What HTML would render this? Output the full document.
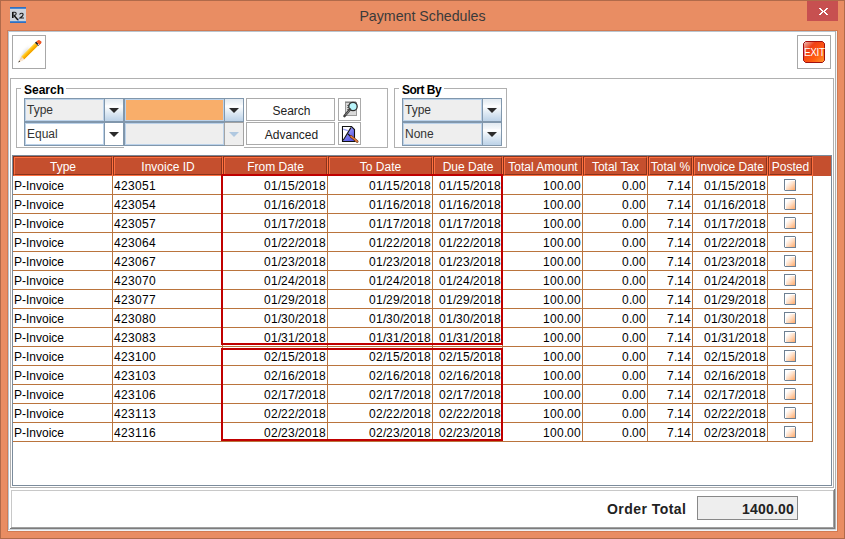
<!DOCTYPE html>
<html><head><meta charset="utf-8"><style>
html,body{margin:0;padding:0;width:845px;height:539px;overflow:hidden;background:#E98D63}
body{position:relative;font-family:"Liberation Sans",sans-serif}
body>div{position:absolute}
.t{white-space:nowrap;line-height:14px}
.n{font-size:12px;color:#000}.n i,.n b{display:inline-block;font-style:normal;font-weight:normal;width:7px}.n b{width:3px}
</style></head><body>
<div style="left:0px;top:0px;width:845px;height:539px;background:#E98D63;border:1px solid #B06A4A;box-sizing:border-box"></div>
<div style="left:7px;top:30px;width:831px;height:502px;background:#fff;border:1px solid #D27A52;box-sizing:border-box"></div>
<div style="left:8px;top:31px;width:1px;height:500px;background:#B9C5CF"></div>
<div style="left:8px;top:31px;width:829px;height:1px;background:#B9C5CF"></div>
<div style="left:835px;top:31px;width:1px;height:498px;background:#B0B0B0"></div>
<div style="left:836px;top:31px;width:1px;height:500px;background:#F0F4F7"></div>
<div style="left:8px;top:530px;width:829px;height:1px;background:#F0F4F7"></div>
<div style="left:9px;top:529px;width:827px;height:1px;background:#CDD3D8"></div>
<div style="left:807px;top:1px;width:31px;height:20px;background:#C75050"></div>
<div style="left:819px;top:8px;width:2px;height:1px;background:#fff"></div>
<div style="left:826px;top:8px;width:2px;height:1px;background:#fff"></div>
<div style="left:820px;top:9px;width:2px;height:1px;background:#fff"></div>
<div style="left:825px;top:9px;width:2px;height:1px;background:#fff"></div>
<div style="left:821px;top:10px;width:2px;height:1px;background:#fff"></div>
<div style="left:824px;top:10px;width:2px;height:1px;background:#fff"></div>
<div style="left:822px;top:11px;width:3px;height:1px;background:#fff"></div>
<div style="left:821px;top:12px;width:2px;height:1px;background:#fff"></div>
<div style="left:824px;top:12px;width:2px;height:1px;background:#fff"></div>
<div style="left:820px;top:13px;width:2px;height:1px;background:#fff"></div>
<div style="left:825px;top:13px;width:2px;height:1px;background:#fff"></div>
<div style="left:819px;top:14px;width:2px;height:1px;background:#fff"></div>
<div style="left:826px;top:14px;width:2px;height:1px;background:#fff"></div>
<div class="t" style="left:0px;top:9px;width:845px;text-align:center;font-size:14.2px;color:#3A3A3A;">Payment Schedules</div>
<svg style="position:absolute;left:10px;top:7px" width="16" height="16" viewBox="0 0 16 16">
<rect x="0" y="0" width="16" height="16" fill="#CDD2DA"/>
<rect x="0" y="0" width="16" height="1" fill="#2F6FC0"/><rect x="0" y="1" width="16" height="1" fill="#4A88D0"/>
<rect x="0" y="14" width="16" height="1" fill="#4A88D0"/><rect x="0" y="15" width="16" height="1" fill="#2F6FC0"/>
<rect x="2" y="5" width="1.6" height="6" fill="#111"/>
<path d="M2.5 5.2 L5 5.2 Q6.6 5.6 6 7.2 Q5.4 8.4 3.5 8.4" fill="none" stroke="#222" stroke-width="1.1"/>
<path d="M4 8.5 L8 13" stroke="#111" stroke-width="1.4"/>
<path d="M9.5 7.5 Q11 5.6 12.8 6.6 Q13.6 7.6 12.4 9 L10 11 L14 11" fill="none" stroke="#222" stroke-width="1.2"/>
<rect x="8" y="12.4" width="1" height="1" fill="#3060C0"/>
</svg>
<div style="left:12px;top:35px;width:34px;height:34px;border:1px solid #A8A8A8;box-sizing:border-box"></div>
<div style="left:797px;top:35px;width:34px;height:34px;border:1px solid #A8A8A8;box-sizing:border-box"></div>
<svg style="position:absolute;left:12px;top:35px" width="34" height="34" viewBox="0 0 34 34">
<defs>
<linearGradient id="pg" gradientUnits="userSpaceOnUse" x1="16.5" y1="14.5" x2="19.6" y2="17.6"><stop offset="0" stop-color="#FFD650"/><stop offset="0.45" stop-color="#FFB800"/><stop offset="0.8" stop-color="#F2A000"/><stop offset="1" stop-color="#FFE27A"/></linearGradient>
<filter id="bl" x="-50%" y="-50%" width="200%" height="200%"><feGaussianBlur stdDeviation="1.5"/></filter>
</defs>
<path d="M7 26 L12 17 L18 11 L13 21 Z" fill="#A0A0A0" opacity="0.5" filter="url(#bl)"/>
<path d="M9.2 21.45 L12.28 24.59 L26.04 11.01 L22.96 7.87 Z" fill="url(#pg)"/>
<path d="M6.3 27.4 L9.2 21.45 L12.28 24.59 Z" fill="#F2CFA8"/>
<path d="M6.3 27.4 L10.5 23.3 L12.28 24.59 Z" fill="#FBE6D0"/>
<path d="M6.3 27.4 L7.17 25.62 L8.09 26.56 Z" fill="#222"/>
<path d="M22.96 7.87 L26.04 11.01 L27.38 9.7 L24.3 6.56 Z" fill="#1E1E1E"/>
<path d="M25.2 10.2 L27.38 9.7 L26.5 8.6 Z" fill="#E8E8E8"/>
<path d="M24.3 6.56 L27.38 9.7 L28.6 8.5 Q29.6 7.2 28.6 6 Q27.4 4.8 26.1 5.2 Z" fill="#FF5A1E"/>
<path d="M27.38 9.7 L28.6 8.5 Q29.6 7.2 28.6 6" fill="none" stroke="#D83A10" stroke-width="0.7"/>
</svg>
<svg style="position:absolute;left:803px;top:41px" width="22" height="22" viewBox="0 0 22 22">
<defs><linearGradient id="eg" x1="0" y1="0" x2="1" y2="1"><stop offset="0" stop-color="#E8C8C8"/><stop offset="0.3" stop-color="#F04018"/><stop offset="0.65" stop-color="#FF5A10"/><stop offset="1" stop-color="#FF9A30"/></linearGradient></defs>
<path d="M2.5 0.5 L19.5 0.5 L21.5 2.5 L21.5 19.5 L19.5 21.5 L2.5 21.5 L0.5 19.5 L0.5 2.5 Z" fill="url(#eg)" stroke="#A01010" stroke-width="1"/>
<text x="11.3" y="15.2" font-family="Liberation Sans" font-size="10" fill="#fff" text-anchor="middle" letter-spacing="-0.35">EXIT</text>
</svg>
<div style="left:10px;top:78px;width:824px;height:410px;border:1px solid #B0B0B0;box-sizing:border-box"></div>
<div style="left:16px;top:88px;width:372px;height:60px;border:1px solid #B0B0B0;box-sizing:border-box"></div>
<div style="left:21px;top:80px;width:45px;height:12px;background:#fff"></div>
<div class="t" style="left:24px;top:83px;text-align:left;font-weight:bold;font-size:12px;color:#000;">Search</div>
<div style="left:394px;top:88px;width:113px;height:60px;border:1px solid #B0B0B0;box-sizing:border-box"></div>
<div style="left:399px;top:80px;width:45px;height:12px;background:#fff"></div>
<div class="t" style="left:402px;top:83px;text-align:left;font-weight:bold;font-size:12px;color:#000;letter-spacing:-0.5px">Sort By</div>
<div style="left:124px;top:147px;width:120px;height:1px;background:#fff"></div>
<div style="left:24px;top:98px;width:100px;height:24px;background:#8197AC"></div>
<div style="left:25px;top:99px;width:79px;height:22px;background:#BBD2EA"></div>
<div style="left:26px;top:100px;width:77px;height:20px;background:#EEEEEE"></div>
<div style="left:105px;top:99px;width:18px;height:22px;background:linear-gradient(#E2EAF1 0%,#F4F7FA 25%,#FFFFFF 32%,#E2ECF5 60%,#BCD2E8 100%)"></div>
<svg style="position:absolute;left:109px;top:108px" width="10" height="5"><path d="M0 0 L10 0 L5 5 Z" fill="#2B2B2B"/></svg>
<div class="t" style="left:27px;top:103px;text-align:left;font-size:12px;color:#333;">Type</div>
<div style="left:24px;top:122px;width:100px;height:24px;background:#8197AC"></div>
<div style="left:25px;top:123px;width:79px;height:22px;background:#BBD2EA"></div>
<div style="left:26px;top:124px;width:77px;height:20px;background:#fff"></div>
<div style="left:105px;top:123px;width:18px;height:22px;background:#fff"></div>
<svg style="position:absolute;left:109px;top:132px" width="10" height="5"><path d="M0 0 L10 0 L5 5 Z" fill="#2B2B2B"/></svg>
<div class="t" style="left:27px;top:127px;text-align:left;font-size:12px;color:#333;">Equal</div>
<div style="left:124px;top:98px;width:120px;height:24px;background:#8197AC"></div>
<div style="left:125px;top:99px;width:99px;height:22px;background:#BBD2EA"></div>
<div style="left:126px;top:100px;width:97px;height:20px;background:#F9AE6A"></div>
<div style="left:225px;top:99px;width:18px;height:22px;background:linear-gradient(#E2EAF1 0%,#F4F7FA 25%,#FFFFFF 32%,#E2ECF5 60%,#BCD2E8 100%)"></div>
<svg style="position:absolute;left:229px;top:108px" width="10" height="5"><path d="M0 0 L10 0 L5 5 Z" fill="#2B2B2B"/></svg>
<div style="left:124px;top:122px;width:120px;height:24px;background:#8197AC"></div>
<div style="left:125px;top:123px;width:99px;height:22px;background:#BBD2EA"></div>
<div style="left:126px;top:124px;width:97px;height:20px;background:#EEEEEE"></div>
<div style="left:225px;top:123px;width:18px;height:22px;background:#EEEEEE"></div>
<svg style="position:absolute;left:229px;top:132px" width="10" height="5"><path d="M0 0 L10 0 L5 5 Z" fill="#2B2B2B"/></svg>
<div style="left:225px;top:122px;width:19px;height:1px;background:#A3A3A3"></div>
<div style="left:225px;top:145px;width:19px;height:1px;background:#A3A3A3"></div>
<div style="left:243px;top:122px;width:1px;height:24px;background:#A3A3A3"></div>
<div style="left:224px;top:123px;width:1px;height:22px;background:#A3A3A3"></div>
<div style="left:225px;top:123px;width:18px;height:22px;background:#EEEEEE"></div>
<svg style="position:absolute;left:229px;top:132px" width="10" height="5"><path d="M0 0 L10 0 L5 5 Z" fill="#B0C8E0"/></svg>
<div style="left:402px;top:98px;width:100px;height:24px;background:#8197AC"></div>
<div style="left:403px;top:99px;width:79px;height:22px;background:#BBD2EA"></div>
<div style="left:404px;top:100px;width:77px;height:20px;background:#EEEEEE"></div>
<div style="left:483px;top:99px;width:18px;height:22px;background:linear-gradient(#E2EAF1 0%,#F4F7FA 25%,#FFFFFF 32%,#E2ECF5 60%,#BCD2E8 100%)"></div>
<svg style="position:absolute;left:487px;top:108px" width="10" height="5"><path d="M0 0 L10 0 L5 5 Z" fill="#2B2B2B"/></svg>
<div class="t" style="left:405px;top:103px;text-align:left;font-size:12px;color:#333;">Type</div>
<div style="left:402px;top:122px;width:100px;height:24px;background:#8197AC"></div>
<div style="left:403px;top:123px;width:79px;height:22px;background:#BBD2EA"></div>
<div style="left:404px;top:124px;width:77px;height:20px;background:#EEEEEE"></div>
<div style="left:483px;top:123px;width:18px;height:22px;background:linear-gradient(#E2EAF1 0%,#F4F7FA 25%,#FFFFFF 32%,#E2ECF5 60%,#BCD2E8 100%)"></div>
<svg style="position:absolute;left:487px;top:132px" width="10" height="5"><path d="M0 0 L10 0 L5 5 Z" fill="#2B2B2B"/></svg>
<div class="t" style="left:405px;top:127px;text-align:left;font-size:12px;color:#333;">None</div>
<div style="left:246px;top:98px;width:89px;height:23px;border:1px solid #ABABAB;box-sizing:border-box"></div>
<div class="t" style="left:247px;top:104px;width:89px;text-align:center;font-size:12px;color:#222;">Search</div>
<div style="left:246px;top:122px;width:89px;height:23px;border:1px solid #ABABAB;box-sizing:border-box"></div>
<div class="t" style="left:247px;top:128px;width:89px;text-align:center;font-size:12px;color:#222;">Advanced</div>
<div style="left:338px;top:98px;width:23px;height:23px;border:1px solid #ABABAB;box-sizing:border-box"></div>
<div style="left:338px;top:122px;width:23px;height:23px;border:1px solid #ABABAB;box-sizing:border-box"></div>
<svg style="position:absolute;left:338px;top:98px" width="23" height="23" viewBox="0 0 23 23">
<rect x="7.5" y="4.5" width="11" height="13" fill="#DADADA" stroke="#9A9A9A" stroke-width="1"/>
<path d="M7 4 L18 4" stroke="#777" stroke-width="1"/>
<rect x="9" y="7" width="2" height="1" fill="#777"/><rect x="9" y="9" width="2" height="1" fill="#777"/><rect x="9" y="11" width="2" height="1" fill="#777"/>
<circle cx="15" cy="8.5" r="4.2" fill="#B8F4FA" stroke="#303030" stroke-width="1.3"/>
<path d="M12 11.5 L6.5 18" stroke="#404040" stroke-width="2.6" stroke-linecap="round"/>
<path d="M11.5 12.5 L7.5 17" stroke="#A0A0A0" stroke-width="0.8"/>
</svg>
<svg style="position:absolute;left:338px;top:122px" width="23" height="23" viewBox="0 0 23 23">
<defs><linearGradient id="dg" x1="0" y1="0" x2="0.6" y2="1"><stop offset="0" stop-color="#B4B4FA"/><stop offset="1" stop-color="#5858E6"/></linearGradient></defs>
<path d="M4.5 4.5 L13.5 4.5 L16.5 7.5 L16.5 19.5 L4.5 19.5 Z" fill="url(#dg)" stroke="#111" stroke-width="1.1"/>
<path d="M5 5 L13 5 L6.3 16.5 L5 18.8 Z" fill="#FFFFFF"/>
<path d="M5.2 7.2 L9.8 8.6" stroke="#A0A0F6" stroke-width="1.4"/>
<path d="M5.2 18.2 L12.9 5.6" stroke="#111" stroke-width="1.1"/>
<path d="M10 12 L14 15.6" stroke="#111" stroke-width="1.1"/>
<path d="M13 14.4 L19.2 19.4" stroke="#5A2A10" stroke-width="2.6" stroke-linecap="round"/>
<path d="M13 14.4 L19.2 19.4" stroke="#E07A3A" stroke-width="1.5" stroke-linecap="round"/>
</svg>
<div style="left:12px;top:155px;width:820px;height:331px;border:1px solid #7B8B9B;box-sizing:border-box"></div>
<div style="left:13px;top:156px;width:818px;height:20px;background:#C54F2E"></div>
<div style="left:13px;top:156px;width:100px;height:20px;border:1px solid;border-color:#8A331B #FF7040 #FF7040 #8A331B;box-sizing:border-box"></div>
<div style="left:14px;top:157px;width:98px;height:18px;border:1px solid;border-color:#FF7040 #8A331B #8A331B #FF7040;box-sizing:border-box"></div>
<div class="t" style="left:13px;top:160px;width:100px;text-align:center;font-size:12px;color:#fff;">Type</div>
<div style="left:113px;top:156px;width:110px;height:20px;border:1px solid;border-color:#8A331B #FF7040 #FF7040 #8A331B;box-sizing:border-box"></div>
<div style="left:114px;top:157px;width:108px;height:18px;border:1px solid;border-color:#FF7040 #8A331B #8A331B #FF7040;box-sizing:border-box"></div>
<div class="t" style="left:113px;top:160px;width:110px;text-align:center;font-size:12px;color:#fff;">Invoice ID</div>
<div style="left:223px;top:156px;width:105px;height:20px;border:1px solid;border-color:#8A331B #FF7040 #FF7040 #8A331B;box-sizing:border-box"></div>
<div style="left:224px;top:157px;width:103px;height:18px;border:1px solid;border-color:#FF7040 #8A331B #8A331B #FF7040;box-sizing:border-box"></div>
<div class="t" style="left:223px;top:160px;width:105px;text-align:center;font-size:12px;color:#fff;">From Date</div>
<div style="left:328px;top:156px;width:105px;height:20px;border:1px solid;border-color:#8A331B #FF7040 #FF7040 #8A331B;box-sizing:border-box"></div>
<div style="left:329px;top:157px;width:103px;height:18px;border:1px solid;border-color:#FF7040 #8A331B #8A331B #FF7040;box-sizing:border-box"></div>
<div class="t" style="left:328px;top:160px;width:105px;text-align:center;font-size:12px;color:#fff;">To Date</div>
<div style="left:433px;top:156px;width:70px;height:20px;border:1px solid;border-color:#8A331B #FF7040 #FF7040 #8A331B;box-sizing:border-box"></div>
<div style="left:434px;top:157px;width:68px;height:18px;border:1px solid;border-color:#FF7040 #8A331B #8A331B #FF7040;box-sizing:border-box"></div>
<div class="t" style="left:433px;top:160px;width:70px;text-align:center;font-size:12px;color:#fff;">Due Date</div>
<div style="left:503px;top:156px;width:80px;height:20px;border:1px solid;border-color:#8A331B #FF7040 #FF7040 #8A331B;box-sizing:border-box"></div>
<div style="left:504px;top:157px;width:78px;height:18px;border:1px solid;border-color:#FF7040 #8A331B #8A331B #FF7040;box-sizing:border-box"></div>
<div class="t" style="left:503px;top:160px;width:80px;text-align:center;font-size:12px;color:#fff;">Total Amount</div>
<div style="left:583px;top:156px;width:65px;height:20px;border:1px solid;border-color:#8A331B #FF7040 #FF7040 #8A331B;box-sizing:border-box"></div>
<div style="left:584px;top:157px;width:63px;height:18px;border:1px solid;border-color:#FF7040 #8A331B #8A331B #FF7040;box-sizing:border-box"></div>
<div class="t" style="left:583px;top:160px;width:65px;text-align:center;font-size:12px;color:#fff;">Total Tax</div>
<div style="left:648px;top:156px;width:45px;height:20px;border:1px solid;border-color:#8A331B #FF7040 #FF7040 #8A331B;box-sizing:border-box"></div>
<div style="left:649px;top:157px;width:43px;height:18px;border:1px solid;border-color:#FF7040 #8A331B #8A331B #FF7040;box-sizing:border-box"></div>
<div class="t" style="left:648px;top:160px;width:45px;text-align:center;font-size:12px;color:#fff;">Total %</div>
<div style="left:693px;top:156px;width:75px;height:20px;border:1px solid;border-color:#8A331B #FF7040 #FF7040 #8A331B;box-sizing:border-box"></div>
<div style="left:694px;top:157px;width:73px;height:18px;border:1px solid;border-color:#FF7040 #8A331B #8A331B #FF7040;box-sizing:border-box"></div>
<div class="t" style="left:693px;top:160px;width:75px;text-align:center;font-size:12px;color:#fff;">Invoice Date</div>
<div style="left:768px;top:156px;width:45px;height:20px;border:1px solid;border-color:#8A331B #FF7040 #FF7040 #8A331B;box-sizing:border-box"></div>
<div style="left:769px;top:157px;width:43px;height:18px;border:1px solid;border-color:#FF7040 #8A331B #8A331B #FF7040;box-sizing:border-box"></div>
<div class="t" style="left:768px;top:160px;width:45px;text-align:center;font-size:12px;color:#fff;">Posted</div>
<div style="left:13px;top:194px;width:800px;height:1px;background:#BA743D"></div>
<div class="t" style="left:14px;top:179px;width:98px;text-align:left;font-size:12px;color:#000;">P-Invoice</div>
<div class="t n" style="left:114px;top:179px"><i>4</i><i>2</i><i>3</i><i>0</i><i>5</i><i>1</i></div>
<div class="t n" style="left:264px;top:179px"><i>0</i><i>1</i><b>/</b><i>1</i><i>5</i><b>/</b><i>2</i><i>0</i><i>1</i><i>8</i></div>
<div class="t n" style="left:369px;top:179px"><i>0</i><i>1</i><b>/</b><i>1</i><i>5</i><b>/</b><i>2</i><i>0</i><i>1</i><i>8</i></div>
<div class="t n" style="left:439px;top:179px"><i>0</i><i>1</i><b>/</b><i>1</i><i>5</i><b>/</b><i>2</i><i>0</i><i>1</i><i>8</i></div>
<div class="t n" style="left:543px;top:179px"><i>1</i><i>0</i><i>0</i><b>.</b><i>0</i><i>0</i></div>
<div class="t n" style="left:622px;top:179px"><i>0</i><b>.</b><i>0</i><i>0</i></div>
<div class="t n" style="left:667px;top:179px"><i>7</i><b>.</b><i>1</i><i>4</i></div>
<div class="t n" style="left:704px;top:179px"><i>0</i><i>1</i><b>/</b><i>1</i><i>5</i><b>/</b><i>2</i><i>0</i><i>1</i><i>8</i></div>
<div style="left:13px;top:213px;width:800px;height:1px;background:#BA743D"></div>
<div class="t" style="left:14px;top:198px;width:98px;text-align:left;font-size:12px;color:#000;">P-Invoice</div>
<div class="t n" style="left:114px;top:198px"><i>4</i><i>2</i><i>3</i><i>0</i><i>5</i><i>4</i></div>
<div class="t n" style="left:264px;top:198px"><i>0</i><i>1</i><b>/</b><i>1</i><i>6</i><b>/</b><i>2</i><i>0</i><i>1</i><i>8</i></div>
<div class="t n" style="left:369px;top:198px"><i>0</i><i>1</i><b>/</b><i>1</i><i>6</i><b>/</b><i>2</i><i>0</i><i>1</i><i>8</i></div>
<div class="t n" style="left:439px;top:198px"><i>0</i><i>1</i><b>/</b><i>1</i><i>6</i><b>/</b><i>2</i><i>0</i><i>1</i><i>8</i></div>
<div class="t n" style="left:543px;top:198px"><i>1</i><i>0</i><i>0</i><b>.</b><i>0</i><i>0</i></div>
<div class="t n" style="left:622px;top:198px"><i>0</i><b>.</b><i>0</i><i>0</i></div>
<div class="t n" style="left:667px;top:198px"><i>7</i><b>.</b><i>1</i><i>4</i></div>
<div class="t n" style="left:704px;top:198px"><i>0</i><i>1</i><b>/</b><i>1</i><i>6</i><b>/</b><i>2</i><i>0</i><i>1</i><i>8</i></div>
<div style="left:13px;top:232px;width:800px;height:1px;background:#BA743D"></div>
<div class="t" style="left:14px;top:217px;width:98px;text-align:left;font-size:12px;color:#000;">P-Invoice</div>
<div class="t n" style="left:114px;top:217px"><i>4</i><i>2</i><i>3</i><i>0</i><i>5</i><i>7</i></div>
<div class="t n" style="left:264px;top:217px"><i>0</i><i>1</i><b>/</b><i>1</i><i>7</i><b>/</b><i>2</i><i>0</i><i>1</i><i>8</i></div>
<div class="t n" style="left:369px;top:217px"><i>0</i><i>1</i><b>/</b><i>1</i><i>7</i><b>/</b><i>2</i><i>0</i><i>1</i><i>8</i></div>
<div class="t n" style="left:439px;top:217px"><i>0</i><i>1</i><b>/</b><i>1</i><i>7</i><b>/</b><i>2</i><i>0</i><i>1</i><i>8</i></div>
<div class="t n" style="left:543px;top:217px"><i>1</i><i>0</i><i>0</i><b>.</b><i>0</i><i>0</i></div>
<div class="t n" style="left:622px;top:217px"><i>0</i><b>.</b><i>0</i><i>0</i></div>
<div class="t n" style="left:667px;top:217px"><i>7</i><b>.</b><i>1</i><i>4</i></div>
<div class="t n" style="left:704px;top:217px"><i>0</i><i>1</i><b>/</b><i>1</i><i>7</i><b>/</b><i>2</i><i>0</i><i>1</i><i>8</i></div>
<div style="left:13px;top:251px;width:800px;height:1px;background:#BA743D"></div>
<div class="t" style="left:14px;top:236px;width:98px;text-align:left;font-size:12px;color:#000;">P-Invoice</div>
<div class="t n" style="left:114px;top:236px"><i>4</i><i>2</i><i>3</i><i>0</i><i>6</i><i>4</i></div>
<div class="t n" style="left:264px;top:236px"><i>0</i><i>1</i><b>/</b><i>2</i><i>2</i><b>/</b><i>2</i><i>0</i><i>1</i><i>8</i></div>
<div class="t n" style="left:369px;top:236px"><i>0</i><i>1</i><b>/</b><i>2</i><i>2</i><b>/</b><i>2</i><i>0</i><i>1</i><i>8</i></div>
<div class="t n" style="left:439px;top:236px"><i>0</i><i>1</i><b>/</b><i>2</i><i>2</i><b>/</b><i>2</i><i>0</i><i>1</i><i>8</i></div>
<div class="t n" style="left:543px;top:236px"><i>1</i><i>0</i><i>0</i><b>.</b><i>0</i><i>0</i></div>
<div class="t n" style="left:622px;top:236px"><i>0</i><b>.</b><i>0</i><i>0</i></div>
<div class="t n" style="left:667px;top:236px"><i>7</i><b>.</b><i>1</i><i>4</i></div>
<div class="t n" style="left:704px;top:236px"><i>0</i><i>1</i><b>/</b><i>2</i><i>2</i><b>/</b><i>2</i><i>0</i><i>1</i><i>8</i></div>
<div style="left:13px;top:270px;width:800px;height:1px;background:#BA743D"></div>
<div class="t" style="left:14px;top:255px;width:98px;text-align:left;font-size:12px;color:#000;">P-Invoice</div>
<div class="t n" style="left:114px;top:255px"><i>4</i><i>2</i><i>3</i><i>0</i><i>6</i><i>7</i></div>
<div class="t n" style="left:264px;top:255px"><i>0</i><i>1</i><b>/</b><i>2</i><i>3</i><b>/</b><i>2</i><i>0</i><i>1</i><i>8</i></div>
<div class="t n" style="left:369px;top:255px"><i>0</i><i>1</i><b>/</b><i>2</i><i>3</i><b>/</b><i>2</i><i>0</i><i>1</i><i>8</i></div>
<div class="t n" style="left:439px;top:255px"><i>0</i><i>1</i><b>/</b><i>2</i><i>3</i><b>/</b><i>2</i><i>0</i><i>1</i><i>8</i></div>
<div class="t n" style="left:543px;top:255px"><i>1</i><i>0</i><i>0</i><b>.</b><i>0</i><i>0</i></div>
<div class="t n" style="left:622px;top:255px"><i>0</i><b>.</b><i>0</i><i>0</i></div>
<div class="t n" style="left:667px;top:255px"><i>7</i><b>.</b><i>1</i><i>4</i></div>
<div class="t n" style="left:704px;top:255px"><i>0</i><i>1</i><b>/</b><i>2</i><i>3</i><b>/</b><i>2</i><i>0</i><i>1</i><i>8</i></div>
<div style="left:13px;top:289px;width:800px;height:1px;background:#BA743D"></div>
<div class="t" style="left:14px;top:274px;width:98px;text-align:left;font-size:12px;color:#000;">P-Invoice</div>
<div class="t n" style="left:114px;top:274px"><i>4</i><i>2</i><i>3</i><i>0</i><i>7</i><i>0</i></div>
<div class="t n" style="left:264px;top:274px"><i>0</i><i>1</i><b>/</b><i>2</i><i>4</i><b>/</b><i>2</i><i>0</i><i>1</i><i>8</i></div>
<div class="t n" style="left:369px;top:274px"><i>0</i><i>1</i><b>/</b><i>2</i><i>4</i><b>/</b><i>2</i><i>0</i><i>1</i><i>8</i></div>
<div class="t n" style="left:439px;top:274px"><i>0</i><i>1</i><b>/</b><i>2</i><i>4</i><b>/</b><i>2</i><i>0</i><i>1</i><i>8</i></div>
<div class="t n" style="left:543px;top:274px"><i>1</i><i>0</i><i>0</i><b>.</b><i>0</i><i>0</i></div>
<div class="t n" style="left:622px;top:274px"><i>0</i><b>.</b><i>0</i><i>0</i></div>
<div class="t n" style="left:667px;top:274px"><i>7</i><b>.</b><i>1</i><i>4</i></div>
<div class="t n" style="left:704px;top:274px"><i>0</i><i>1</i><b>/</b><i>2</i><i>4</i><b>/</b><i>2</i><i>0</i><i>1</i><i>8</i></div>
<div style="left:13px;top:308px;width:800px;height:1px;background:#BA743D"></div>
<div class="t" style="left:14px;top:293px;width:98px;text-align:left;font-size:12px;color:#000;">P-Invoice</div>
<div class="t n" style="left:114px;top:293px"><i>4</i><i>2</i><i>3</i><i>0</i><i>7</i><i>7</i></div>
<div class="t n" style="left:264px;top:293px"><i>0</i><i>1</i><b>/</b><i>2</i><i>9</i><b>/</b><i>2</i><i>0</i><i>1</i><i>8</i></div>
<div class="t n" style="left:369px;top:293px"><i>0</i><i>1</i><b>/</b><i>2</i><i>9</i><b>/</b><i>2</i><i>0</i><i>1</i><i>8</i></div>
<div class="t n" style="left:439px;top:293px"><i>0</i><i>1</i><b>/</b><i>2</i><i>9</i><b>/</b><i>2</i><i>0</i><i>1</i><i>8</i></div>
<div class="t n" style="left:543px;top:293px"><i>1</i><i>0</i><i>0</i><b>.</b><i>0</i><i>0</i></div>
<div class="t n" style="left:622px;top:293px"><i>0</i><b>.</b><i>0</i><i>0</i></div>
<div class="t n" style="left:667px;top:293px"><i>7</i><b>.</b><i>1</i><i>4</i></div>
<div class="t n" style="left:704px;top:293px"><i>0</i><i>1</i><b>/</b><i>2</i><i>9</i><b>/</b><i>2</i><i>0</i><i>1</i><i>8</i></div>
<div style="left:13px;top:327px;width:800px;height:1px;background:#BA743D"></div>
<div class="t" style="left:14px;top:312px;width:98px;text-align:left;font-size:12px;color:#000;">P-Invoice</div>
<div class="t n" style="left:114px;top:312px"><i>4</i><i>2</i><i>3</i><i>0</i><i>8</i><i>0</i></div>
<div class="t n" style="left:264px;top:312px"><i>0</i><i>1</i><b>/</b><i>3</i><i>0</i><b>/</b><i>2</i><i>0</i><i>1</i><i>8</i></div>
<div class="t n" style="left:369px;top:312px"><i>0</i><i>1</i><b>/</b><i>3</i><i>0</i><b>/</b><i>2</i><i>0</i><i>1</i><i>8</i></div>
<div class="t n" style="left:439px;top:312px"><i>0</i><i>1</i><b>/</b><i>3</i><i>0</i><b>/</b><i>2</i><i>0</i><i>1</i><i>8</i></div>
<div class="t n" style="left:543px;top:312px"><i>1</i><i>0</i><i>0</i><b>.</b><i>0</i><i>0</i></div>
<div class="t n" style="left:622px;top:312px"><i>0</i><b>.</b><i>0</i><i>0</i></div>
<div class="t n" style="left:667px;top:312px"><i>7</i><b>.</b><i>1</i><i>4</i></div>
<div class="t n" style="left:704px;top:312px"><i>0</i><i>1</i><b>/</b><i>3</i><i>0</i><b>/</b><i>2</i><i>0</i><i>1</i><i>8</i></div>
<div style="left:13px;top:346px;width:800px;height:1px;background:#BA743D"></div>
<div class="t" style="left:14px;top:331px;width:98px;text-align:left;font-size:12px;color:#000;">P-Invoice</div>
<div class="t n" style="left:114px;top:331px"><i>4</i><i>2</i><i>3</i><i>0</i><i>8</i><i>3</i></div>
<div class="t n" style="left:264px;top:331px"><i>0</i><i>1</i><b>/</b><i>3</i><i>1</i><b>/</b><i>2</i><i>0</i><i>1</i><i>8</i></div>
<div class="t n" style="left:369px;top:331px"><i>0</i><i>1</i><b>/</b><i>3</i><i>1</i><b>/</b><i>2</i><i>0</i><i>1</i><i>8</i></div>
<div class="t n" style="left:439px;top:331px"><i>0</i><i>1</i><b>/</b><i>3</i><i>1</i><b>/</b><i>2</i><i>0</i><i>1</i><i>8</i></div>
<div class="t n" style="left:543px;top:331px"><i>1</i><i>0</i><i>0</i><b>.</b><i>0</i><i>0</i></div>
<div class="t n" style="left:622px;top:331px"><i>0</i><b>.</b><i>0</i><i>0</i></div>
<div class="t n" style="left:667px;top:331px"><i>7</i><b>.</b><i>1</i><i>4</i></div>
<div class="t n" style="left:704px;top:331px"><i>0</i><i>1</i><b>/</b><i>3</i><i>1</i><b>/</b><i>2</i><i>0</i><i>1</i><i>8</i></div>
<div style="left:13px;top:365px;width:800px;height:1px;background:#BA743D"></div>
<div class="t" style="left:14px;top:350px;width:98px;text-align:left;font-size:12px;color:#000;">P-Invoice</div>
<div class="t n" style="left:114px;top:350px"><i>4</i><i>2</i><i>3</i><i>1</i><i>0</i><i>0</i></div>
<div class="t n" style="left:264px;top:350px"><i>0</i><i>2</i><b>/</b><i>1</i><i>5</i><b>/</b><i>2</i><i>0</i><i>1</i><i>8</i></div>
<div class="t n" style="left:369px;top:350px"><i>0</i><i>2</i><b>/</b><i>1</i><i>5</i><b>/</b><i>2</i><i>0</i><i>1</i><i>8</i></div>
<div class="t n" style="left:439px;top:350px"><i>0</i><i>2</i><b>/</b><i>1</i><i>5</i><b>/</b><i>2</i><i>0</i><i>1</i><i>8</i></div>
<div class="t n" style="left:543px;top:350px"><i>1</i><i>0</i><i>0</i><b>.</b><i>0</i><i>0</i></div>
<div class="t n" style="left:622px;top:350px"><i>0</i><b>.</b><i>0</i><i>0</i></div>
<div class="t n" style="left:667px;top:350px"><i>7</i><b>.</b><i>1</i><i>4</i></div>
<div class="t n" style="left:704px;top:350px"><i>0</i><i>2</i><b>/</b><i>1</i><i>5</i><b>/</b><i>2</i><i>0</i><i>1</i><i>8</i></div>
<div style="left:13px;top:384px;width:800px;height:1px;background:#BA743D"></div>
<div class="t" style="left:14px;top:369px;width:98px;text-align:left;font-size:12px;color:#000;">P-Invoice</div>
<div class="t n" style="left:114px;top:369px"><i>4</i><i>2</i><i>3</i><i>1</i><i>0</i><i>3</i></div>
<div class="t n" style="left:264px;top:369px"><i>0</i><i>2</i><b>/</b><i>1</i><i>6</i><b>/</b><i>2</i><i>0</i><i>1</i><i>8</i></div>
<div class="t n" style="left:369px;top:369px"><i>0</i><i>2</i><b>/</b><i>1</i><i>6</i><b>/</b><i>2</i><i>0</i><i>1</i><i>8</i></div>
<div class="t n" style="left:439px;top:369px"><i>0</i><i>2</i><b>/</b><i>1</i><i>6</i><b>/</b><i>2</i><i>0</i><i>1</i><i>8</i></div>
<div class="t n" style="left:543px;top:369px"><i>1</i><i>0</i><i>0</i><b>.</b><i>0</i><i>0</i></div>
<div class="t n" style="left:622px;top:369px"><i>0</i><b>.</b><i>0</i><i>0</i></div>
<div class="t n" style="left:667px;top:369px"><i>7</i><b>.</b><i>1</i><i>4</i></div>
<div class="t n" style="left:704px;top:369px"><i>0</i><i>2</i><b>/</b><i>1</i><i>6</i><b>/</b><i>2</i><i>0</i><i>1</i><i>8</i></div>
<div style="left:13px;top:403px;width:800px;height:1px;background:#BA743D"></div>
<div class="t" style="left:14px;top:388px;width:98px;text-align:left;font-size:12px;color:#000;">P-Invoice</div>
<div class="t n" style="left:114px;top:388px"><i>4</i><i>2</i><i>3</i><i>1</i><i>0</i><i>6</i></div>
<div class="t n" style="left:264px;top:388px"><i>0</i><i>2</i><b>/</b><i>1</i><i>7</i><b>/</b><i>2</i><i>0</i><i>1</i><i>8</i></div>
<div class="t n" style="left:369px;top:388px"><i>0</i><i>2</i><b>/</b><i>1</i><i>7</i><b>/</b><i>2</i><i>0</i><i>1</i><i>8</i></div>
<div class="t n" style="left:439px;top:388px"><i>0</i><i>2</i><b>/</b><i>1</i><i>7</i><b>/</b><i>2</i><i>0</i><i>1</i><i>8</i></div>
<div class="t n" style="left:543px;top:388px"><i>1</i><i>0</i><i>0</i><b>.</b><i>0</i><i>0</i></div>
<div class="t n" style="left:622px;top:388px"><i>0</i><b>.</b><i>0</i><i>0</i></div>
<div class="t n" style="left:667px;top:388px"><i>7</i><b>.</b><i>1</i><i>4</i></div>
<div class="t n" style="left:704px;top:388px"><i>0</i><i>2</i><b>/</b><i>1</i><i>7</i><b>/</b><i>2</i><i>0</i><i>1</i><i>8</i></div>
<div style="left:13px;top:422px;width:800px;height:1px;background:#BA743D"></div>
<div class="t" style="left:14px;top:407px;width:98px;text-align:left;font-size:12px;color:#000;">P-Invoice</div>
<div class="t n" style="left:114px;top:407px"><i>4</i><i>2</i><i>3</i><i>1</i><i>1</i><i>3</i></div>
<div class="t n" style="left:264px;top:407px"><i>0</i><i>2</i><b>/</b><i>2</i><i>2</i><b>/</b><i>2</i><i>0</i><i>1</i><i>8</i></div>
<div class="t n" style="left:369px;top:407px"><i>0</i><i>2</i><b>/</b><i>2</i><i>2</i><b>/</b><i>2</i><i>0</i><i>1</i><i>8</i></div>
<div class="t n" style="left:439px;top:407px"><i>0</i><i>2</i><b>/</b><i>2</i><i>2</i><b>/</b><i>2</i><i>0</i><i>1</i><i>8</i></div>
<div class="t n" style="left:543px;top:407px"><i>1</i><i>0</i><i>0</i><b>.</b><i>0</i><i>0</i></div>
<div class="t n" style="left:622px;top:407px"><i>0</i><b>.</b><i>0</i><i>0</i></div>
<div class="t n" style="left:667px;top:407px"><i>7</i><b>.</b><i>1</i><i>4</i></div>
<div class="t n" style="left:704px;top:407px"><i>0</i><i>2</i><b>/</b><i>2</i><i>2</i><b>/</b><i>2</i><i>0</i><i>1</i><i>8</i></div>
<div style="left:13px;top:441px;width:800px;height:1px;background:#BA743D"></div>
<div class="t" style="left:14px;top:426px;width:98px;text-align:left;font-size:12px;color:#000;">P-Invoice</div>
<div class="t n" style="left:114px;top:426px"><i>4</i><i>2</i><i>3</i><i>1</i><i>1</i><i>6</i></div>
<div class="t n" style="left:264px;top:426px"><i>0</i><i>2</i><b>/</b><i>2</i><i>3</i><b>/</b><i>2</i><i>0</i><i>1</i><i>8</i></div>
<div class="t n" style="left:369px;top:426px"><i>0</i><i>2</i><b>/</b><i>2</i><i>3</i><b>/</b><i>2</i><i>0</i><i>1</i><i>8</i></div>
<div class="t n" style="left:439px;top:426px"><i>0</i><i>2</i><b>/</b><i>2</i><i>3</i><b>/</b><i>2</i><i>0</i><i>1</i><i>8</i></div>
<div class="t n" style="left:543px;top:426px"><i>1</i><i>0</i><i>0</i><b>.</b><i>0</i><i>0</i></div>
<div class="t n" style="left:622px;top:426px"><i>0</i><b>.</b><i>0</i><i>0</i></div>
<div class="t n" style="left:667px;top:426px"><i>7</i><b>.</b><i>1</i><i>4</i></div>
<div class="t n" style="left:704px;top:426px"><i>0</i><i>2</i><b>/</b><i>2</i><i>3</i><b>/</b><i>2</i><i>0</i><i>1</i><i>8</i></div>
<div style="left:112px;top:176px;width:1px;height:266px;background:#BA743D"></div>
<div style="left:222px;top:176px;width:1px;height:266px;background:#BA743D"></div>
<div style="left:327px;top:176px;width:1px;height:266px;background:#BA743D"></div>
<div style="left:432px;top:176px;width:1px;height:266px;background:#BA743D"></div>
<div style="left:502px;top:176px;width:1px;height:266px;background:#BA743D"></div>
<div style="left:582px;top:176px;width:1px;height:266px;background:#BA743D"></div>
<div style="left:647px;top:176px;width:1px;height:266px;background:#BA743D"></div>
<div style="left:692px;top:176px;width:1px;height:266px;background:#BA743D"></div>
<div style="left:767px;top:176px;width:1px;height:266px;background:#BA743D"></div>
<div style="left:812px;top:176px;width:1px;height:266px;background:#BA743D"></div>
<div style="left:784px;top:179px;width:12px;height:12px;background:#6E8092"></div>
<div style="left:785px;top:180px;width:10px;height:10px;background:#FFFFFF"></div>
<div style="left:786px;top:181px;width:9px;height:9px;background:linear-gradient(135deg,#FFFFFF 15%,#FFE0C8 50%,#FFA868 100%)"></div>
<div style="left:795px;top:179px;width:1px;height:1px;background:#C8D0D8"></div>
<div style="left:784px;top:190px;width:1px;height:1px;background:#C8D0D8"></div>
<div style="left:784px;top:198px;width:12px;height:12px;background:#6E8092"></div>
<div style="left:785px;top:199px;width:10px;height:10px;background:#FFFFFF"></div>
<div style="left:786px;top:200px;width:9px;height:9px;background:linear-gradient(135deg,#FFFFFF 15%,#FFE0C8 50%,#FFA868 100%)"></div>
<div style="left:795px;top:198px;width:1px;height:1px;background:#C8D0D8"></div>
<div style="left:784px;top:209px;width:1px;height:1px;background:#C8D0D8"></div>
<div style="left:784px;top:217px;width:12px;height:12px;background:#6E8092"></div>
<div style="left:785px;top:218px;width:10px;height:10px;background:#FFFFFF"></div>
<div style="left:786px;top:219px;width:9px;height:9px;background:linear-gradient(135deg,#FFFFFF 15%,#FFE0C8 50%,#FFA868 100%)"></div>
<div style="left:795px;top:217px;width:1px;height:1px;background:#C8D0D8"></div>
<div style="left:784px;top:228px;width:1px;height:1px;background:#C8D0D8"></div>
<div style="left:784px;top:236px;width:12px;height:12px;background:#6E8092"></div>
<div style="left:785px;top:237px;width:10px;height:10px;background:#FFFFFF"></div>
<div style="left:786px;top:238px;width:9px;height:9px;background:linear-gradient(135deg,#FFFFFF 15%,#FFE0C8 50%,#FFA868 100%)"></div>
<div style="left:795px;top:236px;width:1px;height:1px;background:#C8D0D8"></div>
<div style="left:784px;top:247px;width:1px;height:1px;background:#C8D0D8"></div>
<div style="left:784px;top:255px;width:12px;height:12px;background:#6E8092"></div>
<div style="left:785px;top:256px;width:10px;height:10px;background:#FFFFFF"></div>
<div style="left:786px;top:257px;width:9px;height:9px;background:linear-gradient(135deg,#FFFFFF 15%,#FFE0C8 50%,#FFA868 100%)"></div>
<div style="left:795px;top:255px;width:1px;height:1px;background:#C8D0D8"></div>
<div style="left:784px;top:266px;width:1px;height:1px;background:#C8D0D8"></div>
<div style="left:784px;top:274px;width:12px;height:12px;background:#6E8092"></div>
<div style="left:785px;top:275px;width:10px;height:10px;background:#FFFFFF"></div>
<div style="left:786px;top:276px;width:9px;height:9px;background:linear-gradient(135deg,#FFFFFF 15%,#FFE0C8 50%,#FFA868 100%)"></div>
<div style="left:795px;top:274px;width:1px;height:1px;background:#C8D0D8"></div>
<div style="left:784px;top:285px;width:1px;height:1px;background:#C8D0D8"></div>
<div style="left:784px;top:293px;width:12px;height:12px;background:#6E8092"></div>
<div style="left:785px;top:294px;width:10px;height:10px;background:#FFFFFF"></div>
<div style="left:786px;top:295px;width:9px;height:9px;background:linear-gradient(135deg,#FFFFFF 15%,#FFE0C8 50%,#FFA868 100%)"></div>
<div style="left:795px;top:293px;width:1px;height:1px;background:#C8D0D8"></div>
<div style="left:784px;top:304px;width:1px;height:1px;background:#C8D0D8"></div>
<div style="left:784px;top:312px;width:12px;height:12px;background:#6E8092"></div>
<div style="left:785px;top:313px;width:10px;height:10px;background:#FFFFFF"></div>
<div style="left:786px;top:314px;width:9px;height:9px;background:linear-gradient(135deg,#FFFFFF 15%,#FFE0C8 50%,#FFA868 100%)"></div>
<div style="left:795px;top:312px;width:1px;height:1px;background:#C8D0D8"></div>
<div style="left:784px;top:323px;width:1px;height:1px;background:#C8D0D8"></div>
<div style="left:784px;top:331px;width:12px;height:12px;background:#6E8092"></div>
<div style="left:785px;top:332px;width:10px;height:10px;background:#FFFFFF"></div>
<div style="left:786px;top:333px;width:9px;height:9px;background:linear-gradient(135deg,#FFFFFF 15%,#FFE0C8 50%,#FFA868 100%)"></div>
<div style="left:795px;top:331px;width:1px;height:1px;background:#C8D0D8"></div>
<div style="left:784px;top:342px;width:1px;height:1px;background:#C8D0D8"></div>
<div style="left:784px;top:350px;width:12px;height:12px;background:#6E8092"></div>
<div style="left:785px;top:351px;width:10px;height:10px;background:#FFFFFF"></div>
<div style="left:786px;top:352px;width:9px;height:9px;background:linear-gradient(135deg,#FFFFFF 15%,#FFE0C8 50%,#FFA868 100%)"></div>
<div style="left:795px;top:350px;width:1px;height:1px;background:#C8D0D8"></div>
<div style="left:784px;top:361px;width:1px;height:1px;background:#C8D0D8"></div>
<div style="left:784px;top:369px;width:12px;height:12px;background:#6E8092"></div>
<div style="left:785px;top:370px;width:10px;height:10px;background:#FFFFFF"></div>
<div style="left:786px;top:371px;width:9px;height:9px;background:linear-gradient(135deg,#FFFFFF 15%,#FFE0C8 50%,#FFA868 100%)"></div>
<div style="left:795px;top:369px;width:1px;height:1px;background:#C8D0D8"></div>
<div style="left:784px;top:380px;width:1px;height:1px;background:#C8D0D8"></div>
<div style="left:784px;top:388px;width:12px;height:12px;background:#6E8092"></div>
<div style="left:785px;top:389px;width:10px;height:10px;background:#FFFFFF"></div>
<div style="left:786px;top:390px;width:9px;height:9px;background:linear-gradient(135deg,#FFFFFF 15%,#FFE0C8 50%,#FFA868 100%)"></div>
<div style="left:795px;top:388px;width:1px;height:1px;background:#C8D0D8"></div>
<div style="left:784px;top:399px;width:1px;height:1px;background:#C8D0D8"></div>
<div style="left:784px;top:407px;width:12px;height:12px;background:#6E8092"></div>
<div style="left:785px;top:408px;width:10px;height:10px;background:#FFFFFF"></div>
<div style="left:786px;top:409px;width:9px;height:9px;background:linear-gradient(135deg,#FFFFFF 15%,#FFE0C8 50%,#FFA868 100%)"></div>
<div style="left:795px;top:407px;width:1px;height:1px;background:#C8D0D8"></div>
<div style="left:784px;top:418px;width:1px;height:1px;background:#C8D0D8"></div>
<div style="left:784px;top:426px;width:12px;height:12px;background:#6E8092"></div>
<div style="left:785px;top:427px;width:10px;height:10px;background:#FFFFFF"></div>
<div style="left:786px;top:428px;width:9px;height:9px;background:linear-gradient(135deg,#FFFFFF 15%,#FFE0C8 50%,#FFA868 100%)"></div>
<div style="left:795px;top:426px;width:1px;height:1px;background:#C8D0D8"></div>
<div style="left:784px;top:437px;width:1px;height:1px;background:#C8D0D8"></div>
<div style="left:221px;top:174px;width:282px;height:171px;border:2px solid #C00000;box-sizing:border-box"></div>
<div style="left:221px;top:348px;width:282px;height:93px;border:2px solid #C00000;box-sizing:border-box"></div>
<div style="left:11px;top:490px;width:823px;height:1px;background:#C8C8C8"></div>
<div style="left:11px;top:490px;width:1px;height:38px;background:#C8C8C8"></div>
<div style="left:11px;top:527px;width:823px;height:1px;background:#A0A0A0"></div>
<div style="left:10px;top:528px;width:825px;height:1px;background:#7C7C7C"></div>
<div style="left:833px;top:490px;width:1px;height:38px;background:#A0A0A0"></div>
<div style="left:834px;top:489px;width:1px;height:40px;background:#7C7C7C"></div>
<div class="t" style="left:607px;top:502px;text-align:left;font-size:14px;font-weight:bold;color:#222;letter-spacing:0.45px">Order Total</div>
<div style="left:697px;top:496px;width:101px;height:24px;border:1px solid #888888;box-sizing:border-box"></div>
<div style="left:698px;top:497px;width:99px;height:22px;background:#EEEEEE"></div>
<div class="t" style="left:698px;top:502px;width:96px;text-align:right;font-size:14px;font-weight:bold;color:#222;letter-spacing:0.2px">1400.00</div>
</body></html>
